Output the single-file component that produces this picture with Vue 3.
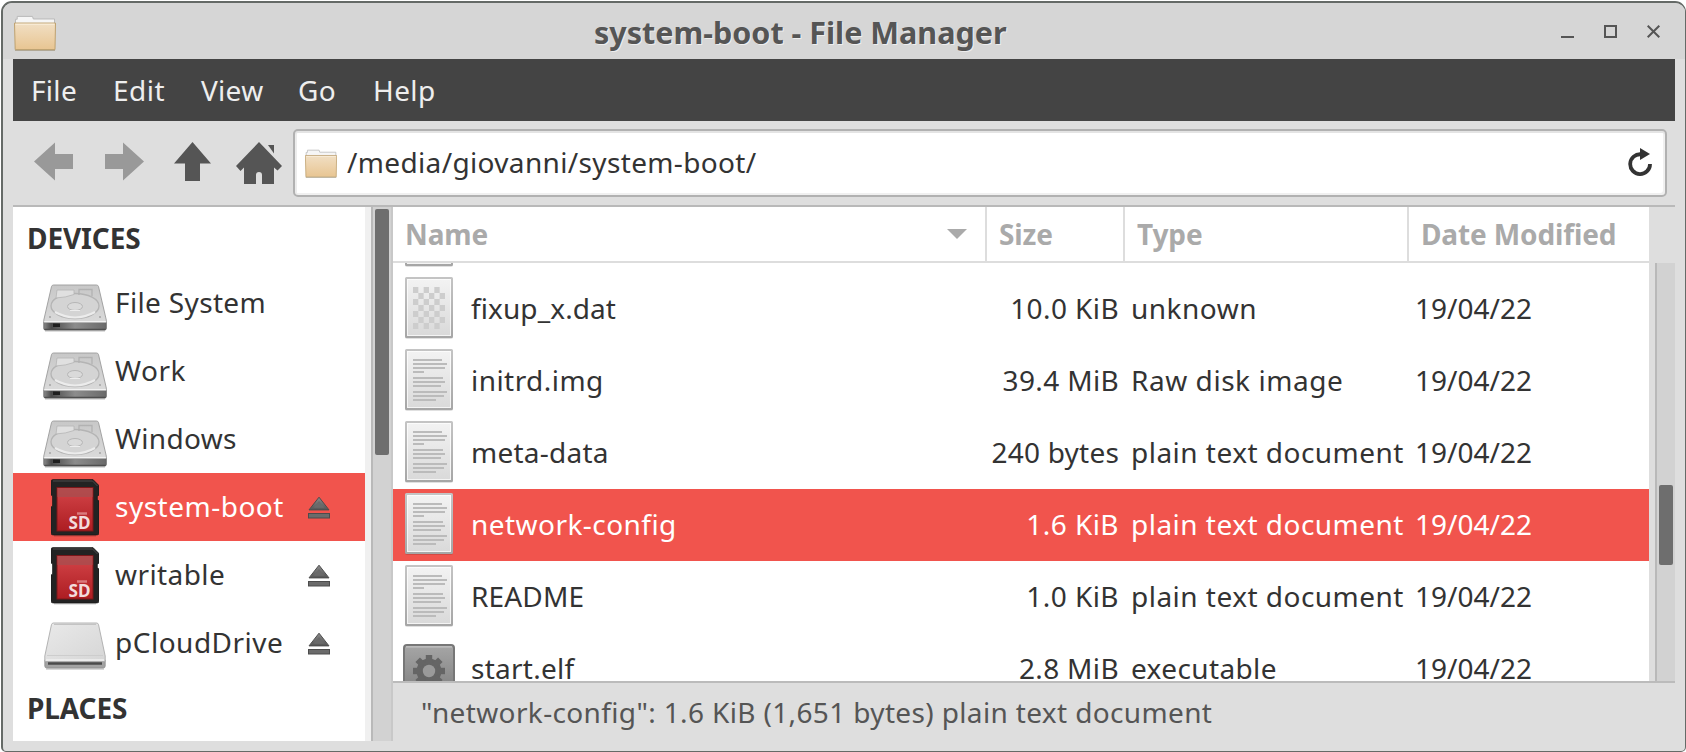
<script setup>
// `track` is the letter spacing of each label in px
const menus = [
  { label: 'File', cls: 'm-file', track: 0.3 },
  { label: 'Edit', cls: 'm-edit', track: 0.5 },
  { label: 'View', cls: 'm-view', track: 0.3 },
  { label: 'Go', cls: 'm-go', track: 0.4 },
  { label: 'Help', cls: 'm-help', track: 0.4 },
]

const devices = [
  { name: 'File System', icon: 'disk', track: 0.35 },
  { name: 'Work', icon: 'disk', track: 0.5 },
  { name: 'Windows', icon: 'disk', track: 0.3 },
  { name: 'system-boot', icon: 'sd', eject: true, selected: true, track: 0.5 },
  { name: 'writable', icon: 'sd', eject: true, track: 0.42 },
  { name: 'pCloudDrive', icon: 'drive', eject: true, track: 0.5 },
]

const plain = { type: 'plain text document', typeTrack: 0.48, icon: 'text' }
const files = [
  { name: '', size: '', type: '', date: '', icon: 'binary' },
  { name: 'fixup_x.dat', track: 0.1, size: '10.0 KiB', sizeTrack: 0.4, type: 'unknown', typeTrack: 0.5, date: '19/04/22', icon: 'binary' },
  { name: 'initrd.img', track: 0.45, size: '39.4 MiB', sizeTrack: 0.35, type: 'Raw disk image', typeTrack: 0.55, date: '19/04/22', icon: 'text' },
  { name: 'meta-data', track: 0.25, size: '240 bytes', sizeTrack: 0.2, date: '19/04/22', ...plain },
  { name: 'network-config', track: 0.45, size: '1.6 KiB', sizeTrack: 0.45, date: '19/04/22', selected: true, ...plain },
  { name: 'README', track: 0.15, size: '1.0 KiB', sizeTrack: 0.45, date: '19/04/22', ...plain },
  { name: 'start.elf', track: 0.25, size: '2.8 MiB', sizeTrack: 0.35, type: 'executable', typeTrack: 0.38, date: '19/04/22', icon: 'exec' },
]

const spacing = (t) => ({ letterSpacing: (t || 0) + 'px' })

// Checkerboard cells of the unknown-file icon: 6 columns by 7 rows
const cells = []
for (let r = 0; r < 7; r++) {
  for (let c = 0; c < 6; c++) {
    if ((r + c) % 2 === 0) cells.push({ x: 8 + c * 5.33, y: 10 + r * 6, k: r + '-' + c })
  }
}

// Text lines of the document icon: [y, width]
const lines = [[11, 29], [15, 34], [19, 32], [23, 11], [29, 30], [33, 32], [37, 28], [43, 34], [47, 31], [51, 23]]
</script>

<template>
  <div class="window">
    <svg class="defs" width="0" height="0">
      <defs>
        <linearGradient id="gFolder" x1="0" y1="0" x2="0" y2="1">
          <stop offset="0" stop-color="#f1dfc4" /><stop offset="1" stop-color="#e8c592" />
        </linearGradient>
        <linearGradient id="gPaper" x1="0" y1="0" x2="0" y2="1">
          <stop offset="0" stop-color="#f3f3f3" /><stop offset="1" stop-color="#d9d9d9" />
        </linearGradient>
        <linearGradient id="gPaperEdge" x1="0" y1="0" x2="0" y2="1">
          <stop offset="0" stop-color="#c4c4c4" /><stop offset="1" stop-color="#a6a6a6" />
        </linearGradient>
        <linearGradient id="gDisk" x1="0" y1="0" x2="0" y2="1">
          <stop offset="0" stop-color="#c8c8c8" /><stop offset="1" stop-color="#dadada" />
        </linearGradient>
        <linearGradient id="gFront" x1="0" y1="0" x2="1" y2="0">
          <stop offset="0" stop-color="#8a8a8a" /><stop offset="0.12" stop-color="#4a4a4a" />
          <stop offset="0.5" stop-color="#8c8c8c" /><stop offset="1" stop-color="#6a6a6a" />
        </linearGradient>
        <linearGradient id="gDrive" x1="0" y1="0" x2="1" y2="1">
          <stop offset="0" stop-color="#e9e9e9" /><stop offset="1" stop-color="#d6d6d6" />
        </linearGradient>
        <linearGradient id="gCard" x1="0" y1="0" x2="0" y2="1">
          <stop offset="0" stop-color="#d44549" /><stop offset="1" stop-color="#ad1d22" />
        </linearGradient>
        <linearGradient id="gExec" x1="0" y1="0" x2="0" y2="1">
          <stop offset="0" stop-color="#a6a6a6" /><stop offset="1" stop-color="#7c7c7c" />
        </linearGradient>
        <linearGradient id="gEject" x1="0" y1="0" x2="0" y2="1">
          <stop offset="0" stop-color="#8a8a8a" /><stop offset="1" stop-color="#555" />
        </linearGradient>
      </defs>

      <symbol id="folder" viewBox="0 0 42 38" preserveAspectRatio="none">
        <path d="M1.500 9V4.500h1.700V1.500H18.500l.8 2.700H40.500V9z" fill="#f6f6f6" stroke="#b9b9b9" />
        <path d="M.5 8.500h41L41 36.500H1.200z" fill="url(#gFolder)" stroke="#bd9f6c" />
        <path d="M1.500 9.700h39" stroke="#fbf0dd" />
        <path d="M1 37.400h40" stroke="#a39880" stroke-width="0.800" />
      </symbol>

      <symbol id="disk" viewBox="0 0 64 48">
        <path d="M2 46.500h60" stroke="#000" stroke-opacity="0.18" stroke-width="2.500" />
        <path d="M.8 38h62.500v6.500q0 1.500-1.500 1.500H2.300q-1.500 0-1.500-1.500z" fill="url(#gFront)" stroke="#606060" stroke-width="0.800" />
        <path d="M10.500 1h43q1.500 0 2 1.500L63.300 36v2.500H.8V36L8.500 2.500q.5-1.500 2-1.500z" fill="url(#gDisk)" stroke="#9b9b9b" stroke-width="0.900" />
        <path d="M1.200 37.600h61.700" stroke="#f2f2f2" stroke-width="1.400" />
        <ellipse cx="32" cy="22" rx="24" ry="12.500" fill="#d4d4d4" stroke="#b4b4b4" stroke-width="1.300" />
        <path d="M12 28q20 11 40 0" fill="none" stroke="#ececec" stroke-width="2" />
        <path d="M14 6h17v4.500q-8 3-18 3.500z" fill="#e0e0e0" stroke="#b5b5b5" stroke-width="0.800" />
        <path d="M36 11V5.500h13V12" fill="none" stroke="#b2b2b2" stroke-width="1.300" />
        <ellipse cx="32" cy="22.500" rx="7.500" ry="4" fill="#dadada" stroke="#b6b6b6" />
        <path d="M27 26.500h10" stroke="#ededed" />
        <circle cx="7" cy="33" r="1" fill="#a5a5a5" /><circle cx="57" cy="33" r="1" fill="#a5a5a5" />
        <rect x="10" y="39.500" width="7" height="3.500" fill="#1f1f1f" />
        <path d="M1.500 45.400h61" stroke="#4e4e4e" stroke-width="1.200" />
      </symbol>

      <symbol id="drive" viewBox="0 0 62 48">
        <path d="M2 47h58" stroke="#000" stroke-opacity="0.15" stroke-width="2" />
        <path d="M.8 38h60.400v6q0 2-2 2H2.800q-2 0-2-2z" fill="#a2a2a2" stroke="#8e8e8e" stroke-width="0.800" />
        <path d="M9.500 1h43q1.500 0 2 1.500L61.200 34v5.500H.8V34L7.500 2.500q.5-1.500 2-1.500z" fill="url(#gDrive)" stroke="#acacac" stroke-width="0.900" />
        <path d="M10 2.500h42" stroke="#c3c3c3" />
        <path d="M3 33.500h56" stroke="#cdcdcd" />
        <path d="M2 38h58" stroke="#f0f0f0" stroke-width="1.500" />
        <path d="M4 41.500h54" stroke="#4b4b4b" stroke-width="2.500" />
      </symbol>

      <symbol id="sd" viewBox="0 0 48 58">
        <path d="M3 56.600h42" stroke="#000" stroke-opacity="0.200" stroke-width="2" />
        <path d="M2 .5h40l6 6v9.500l-1.600 1.500v3L48 22v32q0 2-2 2H2q-2 0-2-2V28l1.500-1V17L0 16V2.500Q0 .5 2 .5z" fill="#232323" stroke="#141414" stroke-width="0.600" />
        <path d="M2 2h39.500l5 5" fill="none" stroke="#4a4a4a" />
        <rect x="6" y="8.500" width="36" height="43.500" fill="url(#gCard)" stroke="#7b1619" />
        <rect x="6.500" y="9" width="35" height="9" fill="#a94d4f" fill-opacity="0.800" />
        <path d="M26 34.500h10" stroke="#e79b9d" stroke-width="2.500" stroke-opacity="0.700" />
        <text x="17.500" y="49.500" class="sd-text" textLength="22" lengthAdjust="spacingAndGlyphs">SD</text>
      </symbol>

      <symbol id="eject" viewBox="0 0 22 24">
        <path d="M11 1.200l10 12.700H1z" fill="url(#gEject)" stroke="#4c4c4c" />
        <path d="M11 5l5.500 6.700h-11z" fill="#6a6a6a" />
        <rect x="0.500" y="17.500" width="21" height="4.500" fill="#6b6b6b" stroke="#4c4c4c" />
      </symbol>

      <symbol id="paper" viewBox="0 0 48 62">
        <rect x="0" y="1" width="48" height="61" rx="2" fill="#000" fill-opacity="0.120" />
        <rect x="1" y="1" width="46" height="59" rx="0.500" fill="url(#gPaper)" stroke="url(#gPaperEdge)" stroke-width="2" />
        <rect x="2.500" y="2.500" width="43" height="56" fill="none" stroke="#fff" stroke-opacity="0.700" />
      </symbol>

      <symbol id="exec" viewBox="0 0 52 54">
        <rect x="1" y="1" width="50" height="52" rx="3" fill="url(#gExec)" stroke="#777" stroke-width="2" />
        <path d="M3 2.900h46" stroke="#c4c4c4" stroke-width="1.400" />
        <g fill="#656565">
          <circle cx="26" cy="27" r="12.500" />
          <rect v-for="a in 8" :key="a" x="22.800" y="11" width="6.400" height="8" :transform="`rotate(${a * 45} 26 27)`" />
        </g>
        <circle cx="26" cy="27" r="6.200" fill="#9a9a9a" />
      </symbol>
    </svg>

    <header class="titlebar">
      <svg class="app-icon"><use href="#folder" /></svg>
      <h1 class="title">system-boot - File Manager</h1>
      <div class="controls">
        <svg viewBox="0 0 14 14"><path d="M0 12h13" /></svg>
        <svg viewBox="0 0 14 14"><path d="M1 1h11v11H1z" /></svg>
        <svg viewBox="0 0 14 14"><path d="M.7 .7l11.600 11.600M12.300 .7L.7 12.300" /></svg>
      </div>
    </header>

    <nav class="menubar">
      <span v-for="m in menus" :key="m.label" :class="m.cls" :style="spacing(m.track)">{{ m.label }}</span>
    </nav>

    <div class="toolbar">
      <svg class="nav-icon" viewBox="0 0 250 76">
        <g fill="#999">
          <path d="M21 40.500L42 21.500V33h18v15H42v11.500z" />
          <path d="M131 40.500L110 21.500V33H92v15h18v11.500z" />
        </g>
        <g fill="#555">
          <path d="M179.500 21L198 42.500H187V60h-15V42.500H161z" />
          <path d="M246 21l23 24-4.500 4.500L261 46.500V63h-12V54q0-3-3-3T243 54v9h-12V46.500l-3.500 3.500L223 45z" />
          <path d="M255 24h6v8.500z" />
        </g>
      </svg>
      <div class="path-entry">
        <svg class="path-icon"><use href="#folder" /></svg>
        <span class="path">/media/giovanni/system-boot/</span>
        <svg class="reload" viewBox="0 0 24 28">
          <path d="M13 6.300A9.900 9.900 0 1 0 22 16" fill="none" stroke="#333" stroke-width="3.800" />
          <path d="M12 0l10 6-10 6z" fill="#333" />
        </svg>
      </div>
    </div>

    <div class="content">
      <aside class="sidebar">
        <h2>DEVICES</h2>
        <div v-for="d in devices" :key="d.name" class="device" :class="{ selected: d.selected }">
          <span class="dev-icon"><svg :class="d.icon"><use :href="'#' + d.icon" /></svg></span>
          <span class="dev-name" :style="spacing(d.track)">{{ d.name }}</span>
          <svg v-if="d.eject" class="eject"><use href="#eject" /></svg>
        </div>
        <h2>PLACES</h2>
      </aside>
      <div class="scroll side-scroll"><div class="thumb" /></div>

      <main class="main">
        <div class="list">
          <div class="table">
            <div class="thead">
              <div class="th"><span>Name</span><svg class="sort" viewBox="0 0 20 10"><path d="M0 0h20L10 10z" /></svg></div>
              <div class="th"><span>Size</span></div>
              <div class="th"><span>Type</span></div>
              <div class="th last"><span>Date Modified</span></div>
            </div>
            <div class="rows">
              <div v-for="f in files" :key="f.name" class="row" :class="{ selected: f.selected }">
                <div class="file-icon">
                  <svg v-if="f.icon === 'exec'" class="exec"><use href="#exec" /></svg>
                  <svg v-else class="doc" viewBox="0 0 48 62">
                    <use href="#paper" width="48" height="62" />
                    <g v-if="f.icon === 'binary'" fill="#cdcdcd">
                      <rect v-for="c in cells" :key="c.k" :x="c.x" :y="c.y" width="5.330" height="6" />
                    </g>
                    <g v-else class="doc-lines">
                      <path v-for="l in lines" :key="l[0]" :d="`M8 ${l[0]}h${l[1]}`" />
                    </g>
                  </svg>
                </div>
                <div class="name" :style="spacing(f.track)">{{ f.name }}</div>
                <div class="size" :style="spacing(f.sizeTrack)">{{ f.size }}</div>
                <div class="type" :style="spacing(f.typeTrack)">{{ f.type }}</div>
                <div class="date">{{ f.date }}</div>
              </div>
            </div>
          </div>
          <div class="scroll main-scroll"><div class="thumb" /></div>
        </div>
        <footer class="status">"network-config": 1.6 KiB (1,651 bytes) plain text document</footer>
      </main>
    </div>
  </div>
</template>

<style>
body { background: #fff; overflow: hidden; }
</style>

<style scoped>
.window {
  box-sizing: border-box;
  width: 1685px;
  height: 751px;
  margin: 1px 0 0 1px;
  border: solid #656a67;
  border-width: 2px 1px 1px 2px;
  border-radius: 11px 11px 5px 5px;
  background: #dedede;
  color: #333;
  font: 28px/40px "Noto Sans", sans-serif;
  display: flex;
  flex-direction: column;
  overflow: hidden;
  white-space: nowrap;
}
.defs { position: absolute; }
svg { display: block; flex: none; }

.titlebar {
  height: 56px;
  flex: none;
  background: #d6d6d6;
  display: flex;
  align-items: flex-start;
  padding: 0 24px 0 11px;
}
.app-icon { width: 42px; height: 36px; margin-top: 12px; }
.title {
  flex: 1;
  margin: 8px 0 0;
  padding-left: 538px;
  font-size: 30.5px;
  line-height: 43px;
  font-weight: 700;
  color: #555;
  text-shadow: 1px 1px 0 #eee;
}
.controls { display: flex; gap: 29px; margin-top: 22px; }
.controls svg { width: 14px; height: 14px; fill: none; stroke: #555; stroke-width: 2; }

.menubar {
  height: 62px;
  flex: none;
  margin: 0 10px;
  background: #444;
  color: #eee;
  display: flex;
  align-items: center;
  padding-left: 18px;
}
.menubar span { line-height: 62px; }
.m-file { width: 82px; }
.m-edit { width: 88px; }
.m-view { width: 97px; }
.m-go { width: 75px; }

.toolbar {
  height: 84px;
  flex: none;
  display: flex;
  align-items: flex-start;
  padding: 0 18px 0 10px;
}
.nav-icon { width: 250px; height: 76px; overflow: visible; margin-right: 30px; }
.path-entry {
  box-sizing: border-box;
  flex: 1;
  height: 68px;
  margin-top: 8px;
  border: 2px solid #b1b1b1;
  border-radius: 5px;
  background: #fff;
  box-shadow: inset 0 2px #e4e4e4, inset 2px 0 #ececec, inset -2px -2px #f0f0f0;
  display: flex;
  align-items: center;
  padding: 0 13px 2px 10px;
}
.path-icon { width: 32px; height: 29px; margin-top: 2px; }
.path { flex: 1; margin-left: 10px; letter-spacing: 0.35px; }
.reload { width: 24px; height: 28px; }

.content {
  flex: none;
  height: 534px;
  margin: 0 10px;
  border-top: 2px solid #b9b9b9;
  display: flex;
}
.sidebar { width: 352px; background: #fff; overflow: hidden; }
.sidebar h2 {
  margin: 0;
  padding-left: 14px;
  height: 62px;
  font-size: 28px;
  line-height: 62px;
  font-weight: 700;
  letter-spacing: -0.1px;
}
.device { height: 68px; display: flex; align-items: flex-start; line-height: 66px; }
.device.selected { background: #f1544d; color: #fff; }
.dev-icon { width: 102px; }
.disk { width: 64px; height: 48px; margin: 15px 0 0 30px; }
.drive { width: 62px; height: 48px; margin: 13px 0 0 31px; }
.sd { width: 48px; height: 58px; margin: 6px 0 0 38px; }
.sd-text { font: 700 17px "Noto Sans", sans-serif; fill: #f3dcdc; }
.dev-name { width: 193px; }
.eject { width: 22px; height: 24px; margin-top: 23px; }

.scroll { box-sizing: border-box; background: #d2d2d2; border-left: 2px solid #b9b9b9; }
.thumb { width: 14px; margin-left: 2px; border-radius: 2px; background: #6e6e6e; }
.side-scroll { width: 28px; border-right: 2px solid #c8c8c8; border-left: 6px solid #f0f0f0; box-shadow: inset 2px 0 #b9b9b9; }
.side-scroll .thumb { margin: 2px 0 0 4px; height: 246px; }

.main { flex: 1; min-width: 0; display: flex; flex-direction: column; }
.list { height: 474px; flex: none; display: flex; border-bottom: 2px solid #bbb; }
.table { width: 1256px; background: #fff; display: flex; flex-direction: column; }
.thead { height: 54px; flex: none; display: grid; grid-template-columns: 594px 138px 284px 240px; border-bottom: 2px solid #ddd; }
.th {
  box-sizing: border-box;
  border-right: 2px solid #ddd;
  padding: 0 18px 0 12px;
  display: flex;
  align-items: center;
  justify-content: space-between;
  color: #aaa;
  font-weight: 700;
  line-height: 54px;
  letter-spacing: -0.13px;
}
.th.last { border-right: 0; }
.sort { width: 20px; height: 10px; fill: #aaa; }
.rows { flex: 1; min-height: 0; overflow: hidden; }
.rows .row:first-child { margin-top: -62px; }
.row {
  height: 72px;
  display: grid;
  grid-template-columns: 78px 512px 136px 286px 1fr;
  line-height: 70px;
}
.row.selected { background: #f1544d; color: #fff; }
.doc { width: 48px; height: 62px; margin: 4px 0 0 12px; }
.exec { width: 52px; height: 54px; margin: 11px 0 0 10px; }
.doc-lines { stroke: #bbb; stroke-width: 2; }
.size { text-align: right; }
.type { padding-left: 12px; }
.date { padding-left: 10px; }

.main-scroll { margin-left: 6px; margin-top: 56px; width: 20px; padding-top: 222px; }
.main-scroll .thumb { height: 80px; }
.status { padding-left: 28px; color: #555; line-height: 58px; height: 58px; letter-spacing: 0.36px; }
</style>
